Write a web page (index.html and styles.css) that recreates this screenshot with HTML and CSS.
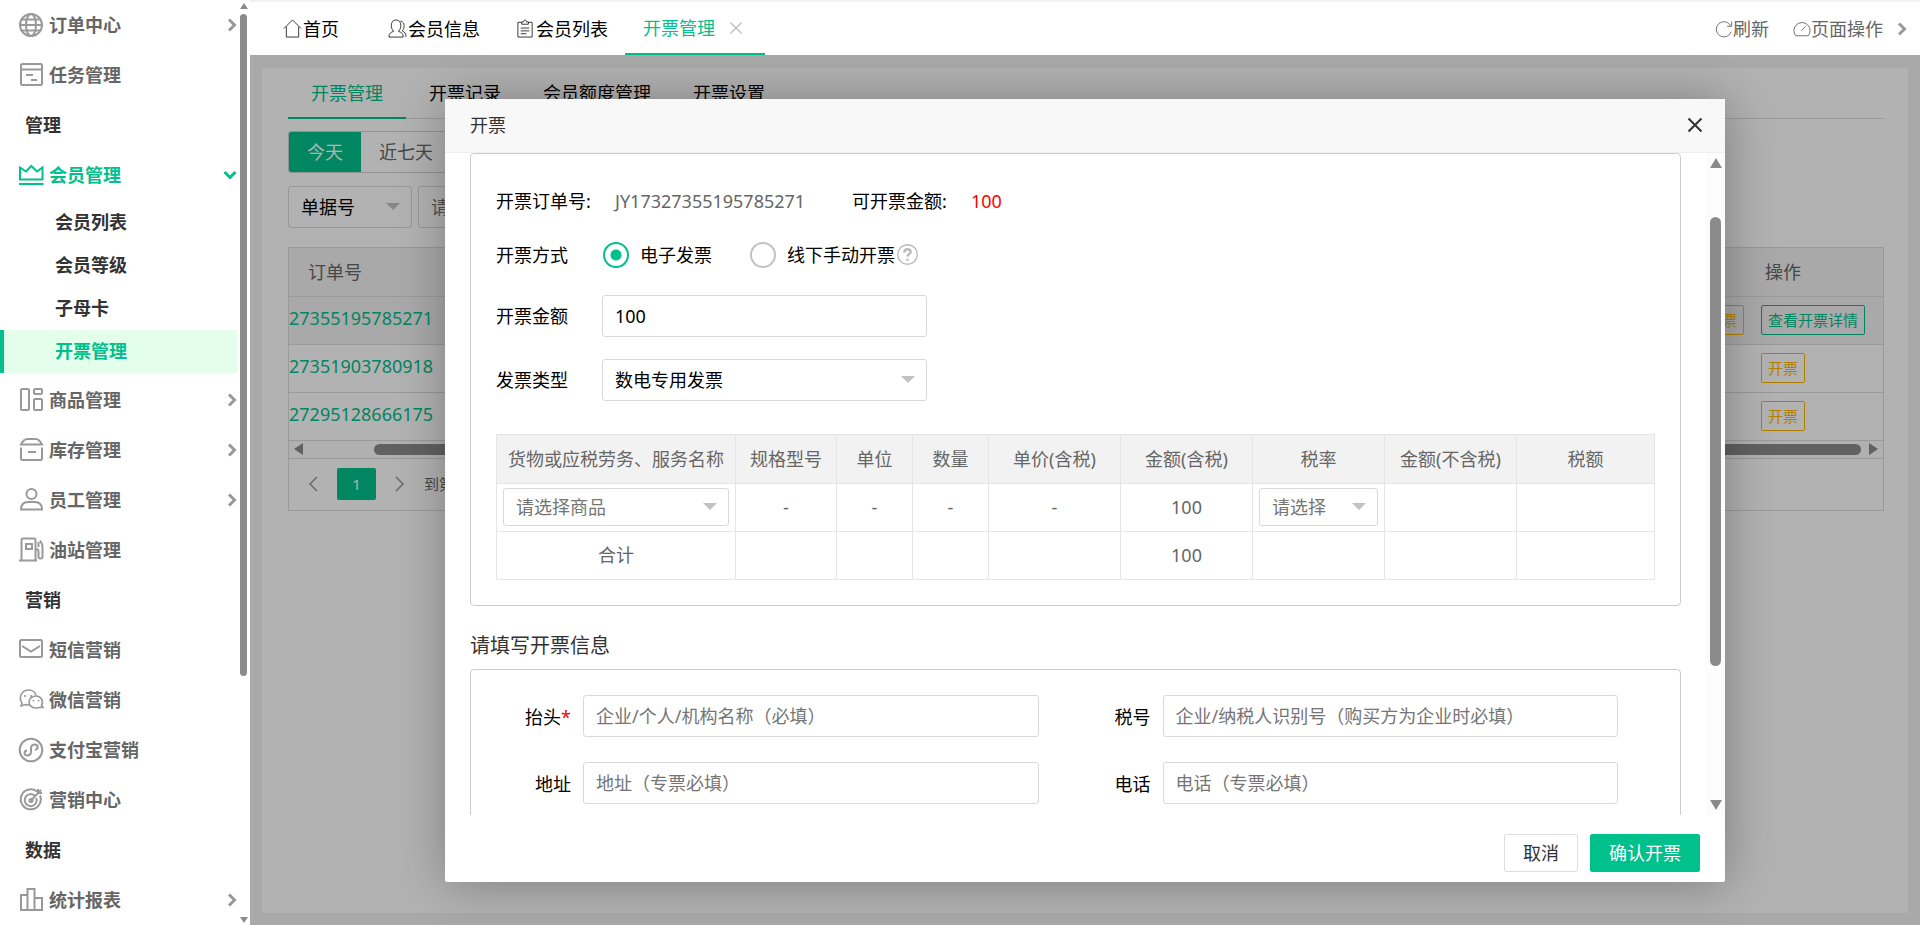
FILE: index.html
```html
<!DOCTYPE html>
<html lang="zh-CN">
<head>
<meta charset="utf-8">
<title>开票管理</title>
<link rel="stylesheet" href="styles.css">
</head>
<body>
<div class="app">
  <aside class="sidebar">
    <nav class="menu">
      <a class="item" href="#"><svg class="ico" viewBox="0 0 24 24"><circle cx="12" cy="12" r="11"/><ellipse cx="12" cy="12" rx="5" ry="11"/><path d="M1 12h22M3 6.500h18M3 17.500h18"/></svg>订单中心<svg class="chev" viewBox="0 0 10 14"><path d="M2 1.500l5.500 5.500L2 12.500"/></svg></a>
      <a class="item" href="#"><svg class="ico" viewBox="0 0 24 24"><rect x="2" y="1" width="21" height="21" rx="1.500"/><path d="M2 6.500h21M7 12h7M12 17h6"/></svg>任务管理</a>
      <h2 class="group">管理</h2>
      <a class="item open" href="#"><svg class="ico" viewBox="0 0 24 24"><path d="M1 4.500v12h22.500v-12l-5.500 4-5.700-5.500L7 8.500zM0 21h24.500"/></svg>会员管理<svg class="chev down" viewBox="0 0 14 10"><path d="M1.500 2L7 7.500 12.500 2"/></svg></a>
      <ul class="sub">
        <li><a href="#">会员列表</a></li>
        <li><a href="#">会员等级</a></li>
        <li><a href="#">子母卡</a></li>
        <li><a class="current" href="#">开票管理</a></li>
      </ul>
      <a class="item" href="#"><svg class="ico" viewBox="0 0 24 24"><rect x="2" y="1" width="8" height="21" rx="1"/><rect x="15" y="1" width="8" height="5" rx="1"/><rect x="15" y="11" width="8" height="11" rx="1"/></svg>商品管理<svg class="chev" viewBox="0 0 10 14"><path d="M2 1.500l5.500 5.500L2 12.500"/></svg></a>
      <a class="item" href="#"><svg class="ico" viewBox="0 0 24 24"><path d="M2 6.500c2-4 4-5.500 6.500-5.500h8c2.500 0 4.500 1.500 6.500 5.500zM2 9.500v11a1.500 1.500 0 0 0 1.500 1.500h18a1.500 1.500 0 0 0 1.500-1.500v-11M9 14h8"/></svg>库存管理<svg class="chev" viewBox="0 0 10 14"><path d="M2 1.500l5.500 5.500L2 12.500"/></svg></a>
      <a class="item" href="#"><svg class="ico" viewBox="0 0 24 24"><circle cx="12.500" cy="6" r="5"/><path d="M2 21.500c0-5 3-7.500 7-7.500h7c4 0 7 2.500 7 7.500z"/></svg>员工管理<svg class="chev" viewBox="0 0 10 14"><path d="M2 1.500l5.500 5.500L2 12.500"/></svg></a>
      <a class="item" href="#"><svg class="ico" viewBox="0 0 24 24"><path d="M0 22.500h18M2.500 22V2a1.500 1.500 0 0 1 1.500-1.500h11A1.500 1.500 0 0 1 16.500 2v20M7 6h6v5H7zM16.500 11c3 0 3 1 3 4v4c0 2 4 2 4 0V9c0-3-1-4-2.500-6.500M19.500 4v5"/></svg>油站管理</a>
      <h2 class="group">营销</h2>
      <a class="item" href="#"><svg class="ico" viewBox="0 0 24 24"><rect x="1" y="2" width="22" height="17" rx="1.500"/><path d="M3 8l9 5.500L21 8"/></svg>短信营销</a>
      <a class="item" href="#"><svg class="ico thin" viewBox="0 0 24 24"><path d="M10 17c-1.500 0-3 0-4-.5L2 18l1-3C-1 9 3 2 9.500 2c4 0 7 2.500 7.500 5.500"/><path d="M24 19.500l-1.500-2.500c2.500-4-.5-9-5.500-9-9 0-9.500 12 0 12 1.500 0 3 0 4-.6z"/><path d="M6 7v2M12 7v2M14.500 12v1.500M19.500 12v1.500"/></svg>微信营销</a>
      <a class="item" href="#"><svg class="ico" viewBox="0 0 24 24"><circle cx="12" cy="12" r="11.300"/><path d="M8 12.500c-3 0-3.500 5 0 5 2.500 0 4-1.500 4-4v-3c0-2.500 1.500-4 4-4 3.500 0 3.500 5 0 5.200"/></svg>支付宝营销</a>
      <a class="item" href="#"><svg class="ico" viewBox="0 0 24 24"><path d="M18 3.500a10 10 0 1 0 3 4M15.500 7.500a6 6 0 1 0 1.800 2.500M12 12.500L22 2M19 1v4h4"/><circle cx="12" cy="12.500" r="1.500"/></svg>营销中心</a>
      <h2 class="group">数据</h2>
      <a class="item" href="#"><svg class="ico" viewBox="0 0 24 24"><path d="M8.500 22V1h7v21M8.500 7H2v15h21V10h-7.500"/></svg>统计报表<svg class="chev" viewBox="0 0 10 14"><path d="M2 1.500l5.500 5.500L2 12.500"/></svg></a>
    </nav>
    <div class="side-scroll"><i class="tri up"></i><i class="thumb"></i><i class="tri dn"></i></div>
  </aside>

  <div class="main">
    <header class="topbar">
      <nav class="tabs">
        <a class="tab home" href="#"><svg class="tico" viewBox="0 0 20 20"><path d="M1 10L10 1l9 9M3.500 8v11h13V8"/></svg>首页</a>
        <a class="tab" href="#"><svg class="tico" viewBox="0 0 20 20"><path d="M1 19c0-4 2-5 5-6-2-2-2.500-4-2.500-6C3.500 3 5.500 1 8.500 1s5 2 5 6c0 2-.5 4-2.500 6 3 1 5 2 5 6zM13 2c3 1 4 3 4 5s-.5 4-2 5.500c2.500 1 4 3 4 6.500"/></svg>会员信息</a>
        <a class="tab last" href="#"><svg class="tico" viewBox="0 0 20 20"><path d="M6 3.500H2V19h15V3.500h-4M6 5.500V3h2c0-2.500 3-2.500 3 0h2v2.500zM5 9.500h9M5 12.500h9M5 15.500h6"/></svg>会员列表</a>
        <a class="tab active" href="#">开票管理<svg class="tclose" viewBox="0 0 12 12"><path d="M.5.5l11 11M11.500.5l-11 11"/></svg></a>
      </nav>
      <div class="tools">
        <button type="button" class="tool"><svg class="tico" viewBox="0 0 20 20"><path d="M17.500 6.500A8.500 8.500 0 1 0 18 13M18.500 1.500v5.500h-5"/></svg>刷新</button>
        <button type="button" class="tool"><svg class="tico" viewBox="0 0 20 20"><path d="M3 17.500a9 9 0 1 1 14 0zM9 12l5-5"/></svg>页面操作</button>
        <svg class="chev" viewBox="0 0 10 14"><path d="M2 1.500l5.500 5.500L2 12.500"/></svg>
      </div>
    </header>

    <div class="stage">
      <main class="panel">
        <nav class="subtabs">
          <a class="on" href="#">开票管理</a><a href="#">开票记录</a><a href="#">会员额度管理</a><a href="#">开票设置</a>
        </nav>
        <div class="range"><button type="button" class="on">今天</button><button type="button">近七天</button></div>
        <div class="filters">
          <span class="select kind"><select aria-label="查询类型"><option>单据号</option></select></span>
          <input class="box" type="text" placeholder="请输入" aria-label="单据号">
        </div>
        <section class="grid">
          <table class="orders">
            <thead><tr><th class="no">订单号</th><th></th><th class="op">操作</th></tr></thead>
            <tbody>
              <tr class="hover"><td class="no"><a href="#">27355195785271</a></td><td class="more"><button type="button" class="mini gold">开票</button></td><td class="op"><button type="button" class="mini">查看开票详情</button></td></tr>
              <tr><td class="no"><a href="#">27351903780918</a></td><td></td><td class="op"><button type="button" class="mini gold">开票</button></td></tr>
              <tr><td class="no"><a href="#">27295128666175</a></td><td></td><td class="op"><button type="button" class="mini gold">开票</button></td></tr>
            </tbody>
          </table>
          <div class="hscroll"><i class="tri lt"></i><i class="thumb"></i><i class="tri rt"></i></div>
          <div class="pager">
            <button type="button" aria-label="上一页"><svg class="pg" viewBox="0 0 10 16"><path d="M9 1L2 8l7 7"/></svg></button>
            <button type="button" class="page">1</button>
            <button type="button" aria-label="下一页"><svg class="pg" viewBox="0 0 10 16"><path d="M1 1l7 7-7 7"/></svg></button>
            <span>到第</span>
          </div>
        </section>
      </main>

      <div class="shade">
        <div class="dialog" role="dialog" aria-labelledby="dlg-title">
          <div class="dlg-head">
            <h1 id="dlg-title">开票</h1>
            <button type="button" class="x" aria-label="关闭"><svg viewBox="0 0 16 16"><path d="M1.500 1.500l13 13M14.500 1.500l-13 13"/></svg></button>
          </div>
          <div class="dlg-body">
            <div class="dlg-content">
              <section class="card first">
                <div class="line order"><span class="lab long">开票订单号:</span><span class="val">JY17327355195785271</span><span class="lab long">可开票金额:</span><span class="red">100</span></div>
                <div class="line mode">
                  <span class="lab">开票方式</span>
                  <label class="radio"><input type="radio" name="mode" checked>电子发票</label>
                  <label class="radio"><input type="radio" name="mode">线下手动开票<svg class="help" viewBox="0 0 20 20"><circle cx="10" cy="10" r="9.300"/><path class="q" d="M7 8c0-4 6-4 6-.5 0 2-3 2.300-3 4.500M10 14v2"/></svg></label>
                </div>
                <div class="line"><label class="lab" for="amount">开票金额</label><input id="amount" class="box wide" type="text" value="100"></div>
                <div class="line"><label class="lab" for="type">发票类型</label><span class="select wide"><select id="type"><option>数电专用发票</option></select></span></div>
                <table class="goods">
                  <colgroup><col class="c-name"><col class="c-spec"><col class="c-unit"><col class="c-unit"><col class="c-amt"><col class="c-amt"><col class="c-amt"><col class="c-amt"><col></colgroup>
                  <thead><tr><th>货物或应税劳务、服务名称</th><th>规格型号</th><th>单位</th><th>数量</th><th>单价(含税)</th><th>金额(含税)</th><th>税率</th><th>金额(不含税)</th><th>税额</th></tr></thead>
                  <tbody>
                    <tr><td><span class="select cell"><select aria-label="商品"><option>请选择商品</option></select></span></td><td>-</td><td>-</td><td>-</td><td>-</td><td>100</td><td><span class="select cell"><select aria-label="税率"><option>请选择</option></select></span></td><td></td><td></td></tr>
                    <tr><td>合计</td><td></td><td></td><td></td><td></td><td>100</td><td></td><td></td><td></td></tr>
                  </tbody>
                </table>
              </section>
              <h2 class="section">请填写开票信息</h2>
              <section class="card info">
                <div class="field"><label for="f1">抬头<b>*</b></label><input id="f1" class="box" type="text" placeholder="企业/个人/机构名称（必填）"></div>
                <div class="field"><label for="f2">税号</label><input id="f2" class="box" type="text" placeholder="企业/纳税人识别号（购买方为企业时必填）"></div>
                <div class="field"><label for="f3">地址</label><input id="f3" class="box" type="text" placeholder="地址（专票必填）"></div>
                <div class="field"><label for="f4">电话</label><input id="f4" class="box" type="text" placeholder="电话（专票必填）"></div>
              </section>
            </div>
            <div class="vscroll"><i class="tri up"></i><i class="thumb"></i><i class="tri dn"></i></div>
          </div>
          <div class="dlg-foot"><button type="button" class="btn">取消</button><button type="button" class="btn primary">确认开票</button></div>
        </div>
      </div>
    </div>
  </div>
</div>
</body>
</html>
```
FILE: styles.css
```css
* { box-sizing: border-box; }
body, h1, h2, ul { margin: 0; padding: 0; }
body, button, input, select {
  font: 400 18px/24px "Noto Sans", "Noto Sans CJK SC", sans-serif;
}
body { color: #000; background: #fff; overflow: hidden; }
a { color: inherit; text-decoration: none; }
ul { list-style: none; }
button { border: 0; background: none; padding: 0; color: inherit; cursor: pointer; }
svg { display: block; flex: none; fill: none; stroke: currentColor; }
i { display: block; flex: none; }

.app { display: flex; height: 100vh; }

/* scroll bars */
.tri { width: 0; height: 0; border: 0 solid transparent; }
.tri.up { border-width: 0 4px 6px; border-bottom-color: #8b8b8b; }
.tri.dn { border-width: 6px 4px 0; border-top-color: #8b8b8b; }
.tri.lt { border-width: 6px 9px 6px 0; border-right-color: #8b8b8b; }
.tri.rt { border-width: 6px 0 6px 9px; border-left-color: #8b8b8b; }
.thumb { background: #8b8b8b; border-radius: 6px; }

/* sidebar */
.sidebar { display: flex; flex: none; width: 250px; overflow: hidden; }
.menu { flex: 1; }
.item { display: flex; align-items: center; height: 50px; padding: 0 3px 0 19px; color: #666; font-weight: 700; }
.ico { width: 24px; height: 24px; margin-right: 6px; stroke: #999; stroke-width: 2; overflow: visible; }
.ico.thin { stroke-width: 1.600; }
.chev { width: 10px; height: 14px; margin-left: auto; stroke: #999; stroke-width: 3; }
.chev.down { width: 14px; height: 10px; }
.item.open, .item.open svg { color: #00c08b; stroke: #00c08b; }
.group { height: 50px; padding-left: 25px; font-size: 18px; line-height: 50px; color: #333; }
.sub { padding: 1px 0 2px; }
.sub a { display: block; height: 43px; margin-right: 3px; padding-left: 51px; border-left: 4px solid transparent; line-height: 42px; font-weight: 700; color: #333; }
.sub .current { color: #00c08b; border-left-color: #00c08b; background: #e3ffeb; }
.side-scroll { display: flex; flex-direction: column; align-items: center; width: 10px; padding: 3px 3px 2px 0; }
.side-scroll .thumb { flex: 0 0 72%; width: 7px; margin-top: 5px; margin-bottom: auto; }

/* top bar */
.main { display: flex; flex: 1; flex-direction: column; min-width: 0; }
.topbar { display: flex; justify-content: space-between; height: 55px; border-top: 2px solid #f2f2f2; }
.tabs { display: flex; }
.tab { display: flex; align-items: center; padding: 0 18px; }
.tab.home { padding: 0 31px 0 33px; }
.tab.last { padding-right: 17px; }
.tico { width: 19px; height: 19px; margin-right: 1px; stroke-width: 1; stroke: #333; }
.tab.active { padding-right: 23px; border-bottom: 2px solid #00c08b; color: #00c08b; }
.tclose { width: 12px; height: 12px; margin-left: 15px; stroke: #bbb; stroke-width: 1.200; }
.tools { display: flex; align-items: center; gap: 24px; padding-right: 13px; color: #666; }
.tool { display: flex; align-items: center; }
.tool .tico { width: 18px; height: 18px; margin-right: 0; stroke: #666; }
.tools .chev { margin-left: -10px; }

/* page behind the dialog */
.stage { position: relative; display: flex; flex: 1; min-height: 0; padding: 13px 12px 12px; background: #f2f2f2; }
.panel { flex: 1; min-width: 0; padding: 0 24px 0 26px; background: #fff; }
.subtabs { display: flex; gap: 4px; height: 51px; border-bottom: 1px solid #ddd; }
.subtabs a { height: 51px; padding: 0 19px; line-height: 51px; }
.subtabs .on { padding: 0 23px; color: #00c08b; border-bottom: 2px solid #00c08b; }
.range { display: flex; width: 200px; height: 42px; margin-top: 12px; border: 1px solid #d2d2d2; border-radius: 3px; color: #666; }
.range button { padding: 0 18px; }
.range .on { background: #00c08b; color: #fff; border-radius: 2px 0 0 2px; }
.filters { display: flex; gap: 6px; margin: 13px 0 19px; }
.box, .select select { width: 100%; height: 42px; padding: 0 12px; border: 1px solid #d9d9d9; border-radius: 3px; background: #fff; color: #000; outline: 0; }
.box::placeholder { color: #757575; opacity: 1; }
.filters .box { width: 240px; }
.select { position: relative; display: block; }
.select select { appearance: none; }
.select::after { content: ""; position: absolute; right: 12px; top: 50%; margin-top: -4px; border: 7px solid transparent; border-top-color: #c2c2c2; border-bottom: 0; pointer-events: none; }
.kind { width: 124px; }

.grid { border: 1px solid #ddd; overflow: hidden; }
.orders { width: 100%; table-layout: fixed; border-collapse: collapse; color: #666; }
.orders th, .orders td { height: 48px; padding: 0; border-bottom: 1px solid #ddd; font-weight: 400; text-align: left; }
.orders th { background: #f2f2f2; }
.orders .no { width: 300px; }
.orders th.no { padding-left: 19px; }
.orders .op { width: 124px; }
.orders th.op { padding-left: 6px; }
.orders td.no { padding-bottom: 4px; color: #00c08b; }
.orders .hover td { background: #f2f2f2; }
.orders .more { text-align: right; }
.more .mini { margin-right: 15px; }
.mini { height: 30px; padding: 0 6px; border: 1px solid #00c08b; border-radius: 2px; color: #00c08b; font-size: 15px; line-height: 28px; vertical-align: middle; }
.op .mini { margin-left: 2px; }
.mini.gold { color: #ffb800; border-color: #ffb800; }
.hscroll { display: flex; align-items: center; height: 18px; padding: 0 5px; background: #fcfcfc; border-bottom: 1px solid #ddd; }
.hscroll .thumb { flex: 1; height: 11px; margin: 0 8px 0 71px; }
.pager { display: flex; align-items: center; height: 51px; padding-left: 19px; font-size: 15px; color: #666; }
.pg { width: 10px; height: 16px; stroke: #999; stroke-width: 1.500; }
.page { width: 39px; height: 32px; margin: 0 19px 0 19px; border-radius: 2px; background: #00c08b; color: #fff; font-size: 15px; }
.pager span { margin-left: 19px; }

/* dialog */
.shade { position: absolute; inset: 0; display: grid; place-items: center; background: rgba(0, 0, 0, .3); }
.dialog { display: flex; flex-direction: column; width: min(1280px, 96%); height: 90%; border-radius: 2px; background: #fff; box-shadow: 1px 1px 50px rgba(0, 0, 0, .3); }
.dlg-head { display: flex; align-items: center; justify-content: space-between; flex: none; height: 54px; padding: 0 22px 0 25px; border-bottom: 1px solid #eee; background: #f8f8f8; }
.dlg-head h1 { font-size: 18px; font-weight: 400; color: #333; }
.x svg { width: 16px; height: 16px; stroke: #333; stroke-width: 2; }
.dlg-body { display: flex; flex: 1; min-height: 0; overflow: hidden; }
.dlg-content { flex: 1; min-width: 0; padding: 0 25px; }
.vscroll { display: flex; flex-direction: column; align-items: center; width: 19px; padding: 5px 0; background: #fcfcfc; }
.vscroll .up { border-width: 0 6px 10px; }
.vscroll .dn { border-width: 10px 6px 0; }
.vscroll .thumb { flex: 0 0 69%; width: 11px; margin: 49px 0 auto; }
.card { border: 1px solid #ccc; border-radius: 4px; }
.first { padding: 24px 25px 25px; }
.line { display: flex; align-items: center; height: 42px; margin-bottom: 22px; }
.lab { width: 106px; flex: none; }
.lab.long { width: 119px; }
.order { height: 46px; margin-bottom: 8px; }
.val { width: 237px; color: #666; }
.red { color: #f00; }
.mode { height: 46px; margin-bottom: 17px; }
.radio { display: flex; align-items: center; margin-right: 37px; }
.radio input { appearance: none; width: 26px; height: 26px; margin: 0 11px 0 1px; border: 2px solid #c2c2c2; border-radius: 50%; }
.radio input:checked { border-color: #00c08b; background: radial-gradient(circle, #00c08b 5px, transparent 6px); }
.help { width: 21px; height: 21px; margin-left: 2px; stroke: #bbb; stroke-width: 1.300; }
.q { stroke-width: 2.400; }
.wide, .box.wide { width: 325px; }
.goods { width: 100%; margin-top: 33px; table-layout: fixed; border-collapse: collapse; color: #666; text-align: center; }
.goods th, .goods td { height: 48px; padding: 0 6px; border: 1px solid #e6e6e6; font-weight: 400; white-space: nowrap; }
.goods th { height: 49px; background: #f2f2f2; }
.c-name { width: 239px; }
.c-spec { width: 101px; }
.c-unit { width: 76px; }
.c-amt { width: 132px; }
.cell select { height: 38px; color: #757575; }
.section { margin: 28px 0 11px; font-size: 20px; line-height: 24px; font-weight: 400; color: #333; }
.info { display: grid; grid-template-columns: 1fr 1fr; row-gap: 25px; padding: 25px 25px 60px; }
.field { display: flex; align-items: center; padding-right: 37px; }
.field label { flex: none; width: 87px; padding: 3px 12px 0 0; text-align: right; }
.field b { color: #f00; font-weight: 400; }
.dlg-foot { display: flex; align-items: center; justify-content: flex-end; gap: 12px; flex: none; height: 67px; padding: 10px 25px 0; }
.btn { height: 38px; padding: 0 18px; border: 1px solid #dedede; border-radius: 2px; color: #333; }
.btn.primary { border-color: #00c08b; background: #00c08b; color: #fff; }
```
